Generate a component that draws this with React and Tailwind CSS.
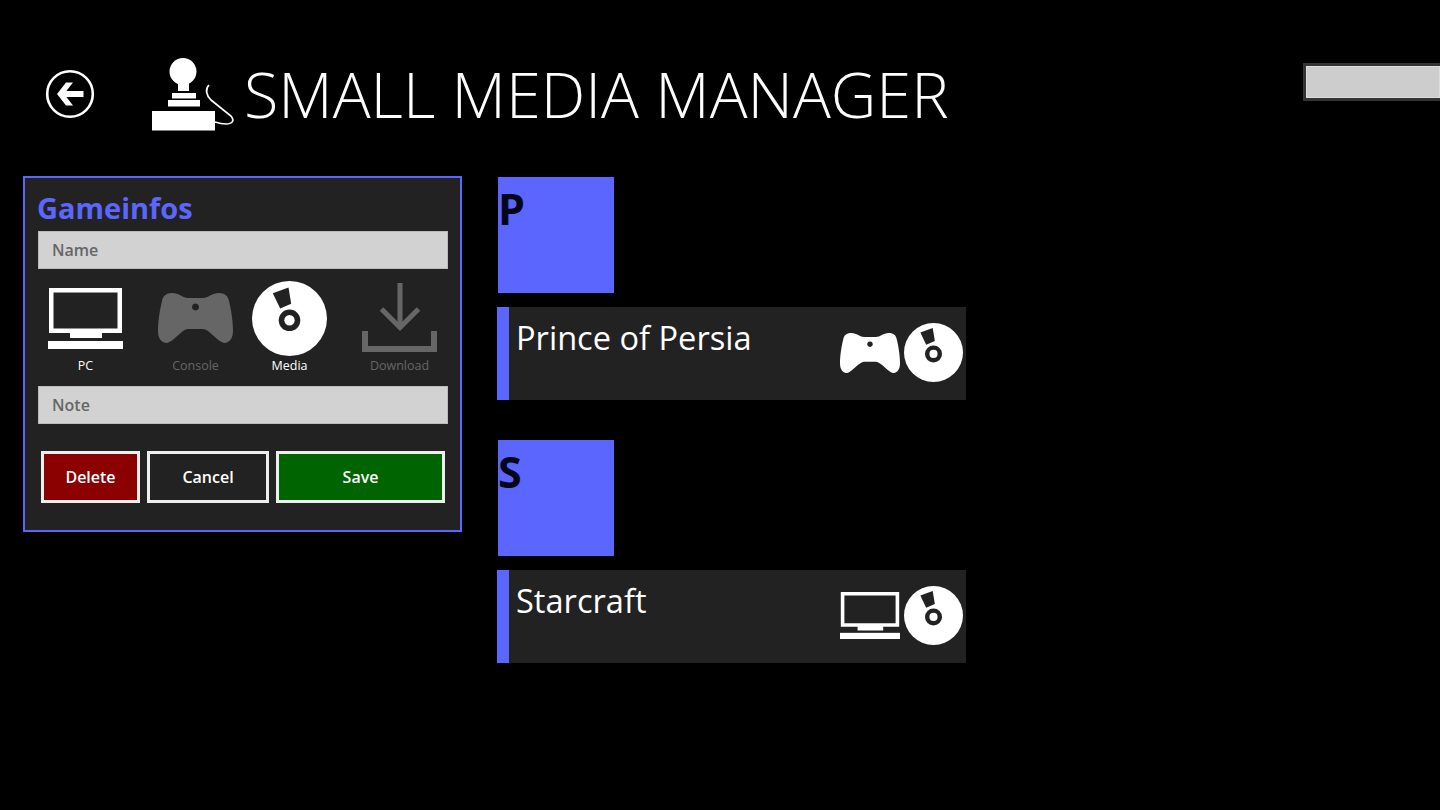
import React from "react";

function BackIcon() {
  return (
    <svg width="50" height="50" viewBox="0 0 50 50" className="block">
      <circle cx="25" cy="25" r="22.8" fill="none" stroke="#fff" strokeWidth="2.6" />
      <path d="M38.500 22H21.400L28 13.500H21L12 25L21 36.500H28L21.400 28H38.500Z" fill="#fff" />
    </svg>
  );
}

function JoystickIcon() {
  return (
    <svg width="84" height="74" viewBox="0 0 84 74" className="block">
      <circle cx="31" cy="13.500" r="13.500" fill="#fff" />
      <rect x="26" y="20" width="11" height="13" fill="#fff" />
      <rect x="20" y="35" width="24" height="5.500" fill="#fff" />
      <rect x="16" y="42" width="32" height="6.500" fill="#fff" />
      <rect x="0" y="53" width="63" height="19.500" fill="#fff" />
      <path d="M57 27C53 31 54 37 59 42L79 58C83 63 80 66 74 66C70 66 66 65 63 64" fill="none" stroke="#fff" strokeWidth="1.7" />
    </svg>
  );
}

function MonitorIcon({ className }) {
  return (
    <svg viewBox="0 0 75 61" preserveAspectRatio="none" className={className} fill="#fff">
      <path fillRule="evenodd" d="M1 0H74V45H54V50H22V45H1ZM5.500 4.500V40.500H69.500V4.500Z" />
      <rect x="0" y="53" width="75" height="8" />
    </svg>
  );
}

function GamepadIcon({ className, color }) {
  return (
    <svg viewBox="0 0 75 50" className={className}>
      <path
        fill={color}
        fillRule="evenodd"
        d="M14 0C8 0 5 3 4 8C2 16 0 28 0 38C0 46 4 50 9 50C15 49 24 36 30 36H45C51 36 60 49 66 50C71 50 75 46 75 38C75 28 73 16 71 8C70 3 67 0 61 0C54 0 50 5 45 5H30C25 5 21 0 14 0ZM37.500 10.500A3.500 3.500 0 1 1 37.499 10.500Z"
      />
    </svg>
  );
}

function DiscIcon({ className }) {
  return (
    <svg viewBox="-37.5 -37.500 75 75" className={className}>
      <circle r="37.5" fill="#fff" />
      <path d="M-16.700 -25.300L-1 -31L1.700 -14.700L-9.300 -10L-16.700 -25.300Z" fill="#222" />
      <circle cy="1.800" r="10.800" fill="#222" />
      <circle cy="1.800" r="5.200" fill="#fff" />
    </svg>
  );
}

function DownloadIcon({ className }) {
  return (
    <svg viewBox="0 0 75 70" className={className} fill="none" stroke="#666">
      <path d="M38 0V43" strokeWidth="5" />
      <path d="M19.500 26L38 44.500L56.500 26" strokeWidth="5" />
      <path d="M3 48V66H72V48" strokeWidth="6" />
    </svg>
  );
}

function TypeOption({ label, dim, className, children }) {
  return (
    <div className={"flex w-[75px] flex-col items-center " + className}>
      <div className="flex h-[76px] w-[75px] items-center justify-center">{children}</div>
      <span className={"mt-[2px] whitespace-nowrap text-[12.500px] leading-[16px] " + (dim ? "text-[#666]" : "text-white")}>
        {label}
      </span>
    </div>
  );
}

function Field({ label, className }) {
  return (
    <div className={"flex h-[38px] w-[410px] items-center border border-[#bbb] bg-[#d2d2d2] pl-[13px] text-[16px] font-semibold text-[#666] " + className}>
      {label}
    </div>
  );
}

function Group({ letter, title, children, className }) {
  return (
    <div className={className}>
      <div className="ml-[1px] h-[116px] w-[116px] bg-[#5b66ff] text-[43px] leading-[64px] font-bold text-[#05051a]">
        {letter}
      </div>
      <div className="mt-[14px] flex h-[93px] w-[469px] bg-[#222]">
        <div className="w-[12px] bg-[#5b66ff]" />
        <div className="ml-[7px] flex-1 pt-[8px] text-[32.600px] leading-[46px] text-white">{title}</div>
        <div className="mr-[3px] flex items-center gap-[4px] pb-[2px]">{children}</div>
      </div>
    </div>
  );
}

export default function App() {
  return (
    <div className="h-[810px] w-[1440px] overflow-hidden bg-black font-['Open_Sans','Noto_Sans',sans-serif] text-white">
      {/* header */}
      <div className="flex h-[176px] items-start">
        <div className="mt-[69px] ml-[45px]">
          <BackIcon />
        </div>
        <div className="mt-[58px] ml-[57px]">
          <JoystickIcon />
        </div>
        <h1 className="mt-[50px] ml-[8px] text-[63px] leading-[88px] font-light whitespace-nowrap">SMALL MEDIA MANAGER</h1>
        <div className="mt-[63px] ml-auto h-[38px] w-[137px] border-[3px] border-r-0 border-[#333] bg-[#cdcdcd] shadow-[inset_0_0_0_1px_#ddd]" />
      </div>

      <div className="flex items-start pl-[23px]">
        {/* game info panel */}
        <div className="h-[356px] w-[439px] border-2 border-[#5b66ff] bg-[#222] px-[13px]">
          <div className="mt-[11px] -ml-[1px] text-[29px] leading-[38px] font-bold text-[#5b66ff]">Gameinfos</div>
          <Field label="Name" className="mt-[4px]" />
          <div className="mt-[11px] flex pl-[10px]">
            <TypeOption label="PC">
              <MonitorIcon className="h-[61px] w-[75px]" />
            </TypeOption>
            <TypeOption label="Console" dim className="ml-[35px]">
              <GamepadIcon className="h-[50px] w-[75px]" color="#666" />
            </TypeOption>
            <TypeOption label="Media" className="ml-[19px]">
              <DiscIcon className="h-[75px] w-[75px]" />
            </TypeOption>
            <TypeOption label="Download" dim className="ml-[35px]">
              <DownloadIcon className="h-[70px] w-[75px]" />
            </TypeOption>
          </div>
          <Field label="Note" className="mt-[12px]" />
          <div className="mt-[27px] ml-[3px] flex gap-[7px] text-[16px] font-semibold text-white">
            <button className="h-[52px] w-[99px] border-[3px] border-[#eee] bg-[#8b0000]">Delete</button>
            <button className="h-[52px] w-[122px] border-[3px] border-[#eee] bg-[#222]">Cancel</button>
            <button className="h-[52px] w-[169px] border-[3px] border-[#eee] bg-[#006400]">Save</button>
          </div>
        </div>

        {/* game list */}
        <div className="ml-[35px] pt-[1px]">
          <Group letter="P" title="Prince of Persia">
            <GamepadIcon className="h-[40px] w-[60px]" color="#fff" />
            <DiscIcon className="h-[59px] w-[59px]" />
          </Group>
          <Group letter="S" title="Starcraft" className="mt-[40px]">
            <MonitorIcon className="h-[47px] w-[60px]" />
            <DiscIcon className="h-[59px] w-[59px]" />
          </Group>
        </div>
      </div>
    </div>
  );
}
